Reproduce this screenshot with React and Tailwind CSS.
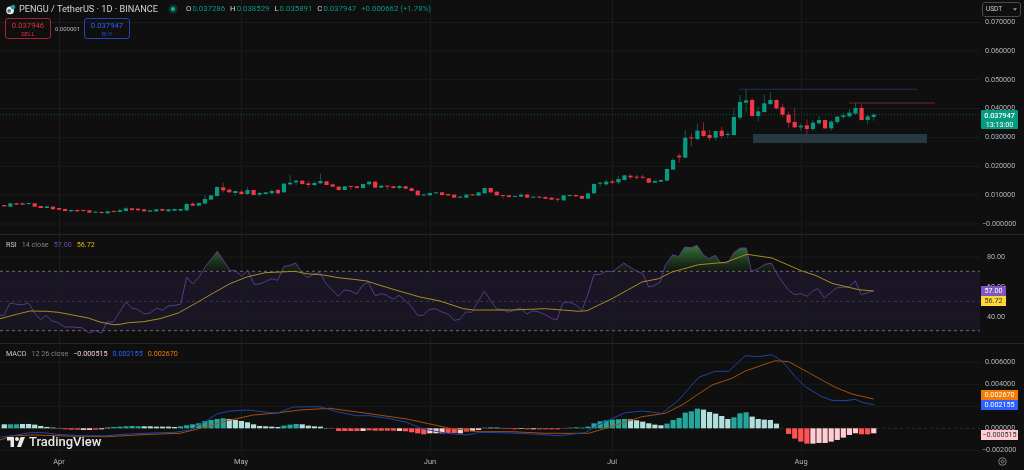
import React from "react";

const GREEN = "#089981";
const RED = "#f23645";
const XK = (k) => 4.3 + 6.08 * k;
const VERT = [59, 241, 430, 612, 801];

// [bodyTop, bodyBottom, wickTop, wickBottom, up] in zoomed crop coordinates
const c3 = [
  [105,109,105,109,0],[100,110,100,110,1],[100,104,98,105,0],[100,104,97,105,0],[99,102,99,104,1],[100,110,99,110,0],[108,114,108,114,0],[109,114,108,115,1],[110,118,110,119,0],[114,119,113,120,0],
  [117,123,116,124,0],[120,124,119,125,1],[120,124,118,125,0],[120,123,119,124,0],[121,128,120,129,0],[125,128,124,129,1],[126,129,124,131,0],[124,130,123,131,1],[123,126,122,127,0],[121,126,116,127,1],
  [115,123,111,124,1],[115,120,114,122,0],[116,121,114,122,0],[118,124,117,125,0],[121,125,120,126,1],[118,124,117,125,1],[117,122,116,124,0],[118,124,117,125,1],[117,122,116,123,1],[117,122,116,123,1],
  [102,121,100,122,1],[101,107,96,108,0],[99,107,97,108,1],[87,101,76,102,1],[76,89,75,90,1],[51,78,50,79,1],[52,61,38,68,0],[59,67,55,68,0],[63,69,62,76,1],[65,72,60,75,0],
  [60,72,52,75,1],[60,75,59,76,0],[69,74,65,78,1],[67,72,66,73,1],[63,70,57,73,1],[60,70,57,73,0],[41,67,40,68,1],[38,43,15,47,1],[32,37,30,45,1],[32,42,31,44,0],
  [40,45,33,53,0],[39,45,34,48,1],[33,40,10,43,1],[34,45,33,46,0],[43,50,41,52,0],[50,60,48,61,0],
];
const c4 = [
  [79,90,78,91,1],[78,81,78,90,0],[79,84,78,85,0],[72,84,71,85,1],[65,73,64,77,1],[65,83,64,84,0],[77,83,76,84,1],[77,80,76,89,0],[79,84,78,86,0],[78,84,76,88,1],
  [79,86,78,87,0],[85,93,82,94,0],[92,106,91,107,0],[103,106,102,109,1],[99,106,98,107,1],[97,100,96,101,1],[97,105,96,106,0],[102,106,101,107,0],[104,113,103,114,0],[110,113,108,114,1],
  [104,113,103,114,1],[103,106,102,107,0],[97,107,96,108,1],[84,100,83,101,1],[84,97,83,98,0],[95,106,94,107,0],[105,107,104,116,0],[106,111,105,112,0],[108,110,107,111,1],[104,110,100,111,1],
  [104,113,102,114,0],[110,113,109,114,1],[110,113,109,114,0],[111,116,109,117,0],[113,119,112,120,0],[116,119,115,126,0],[106,121,105,122,1],[105,108,104,110,1],[105,109,104,110,0],[108,116,107,117,0],
  [100,116,99,117,1],[72,100,70,101,1],[68,71,66,80,1],[65,73,59,77,1],[64,68,58,73,0],[57,67,48,73,1],[46,60,45,61,1],[47,52,43,58,0],[50,53,45,60,0],[50,53,45,57,0],
  [55,68,54,69,0],[63,68,62,69,1],[60,65,59,66,1],[27,62,26,63,1],[0,29,-6,30,1],
];
const c2 = [
  [257,262,250,278,0],[203,263,180,264,1],[202,204,190,228,0],[182,207,160,212,1],[182,198,157,200,0],[195,204,180,212,0],[183,203,182,212,1],[182,198,170,206,0],[192,195,185,203,1],[141,195,115,198,1],
  [96,143,75,150,1],[91,98,58,128,1],[90,138,84,140,0],[124,138,110,155,1],[100,126,73,128,1],[90,102,67,105,1],[90,115,88,118,0],[112,134,102,142,0],[134,158,125,172,0],[156,172,115,175,0],
  [167,172,160,182,1],[166,177,148,192,0],[158,177,150,182,1],[150,160,138,163,1],[150,175,149,177,0],[155,175,150,182,1],[140,156,138,162,1],[136,141,128,148,1],[128,139,118,142,1],[114,131,100,133,1],
  [114,150,103,152,0],[139,150,135,163,1],[134,141,130,152,1],
];
const CANDLES = [
  ...c3.map((c) => [170 + c[0] / 3, 170 + c[1] / 3, 170 + c[2] / 3, 170 + c[3] / 3, c[4]]),
  ...c4.map((c) => [160 + c[0] / 3, 160 + c[1] / 3, 160 + c[2] / 3, 160 + c[3] / 3, c[4]]),
  ...c2.map((c) => [70 + c[0] / 3, 70 + c[1] / 3, 70 + c[2] / 3, 70 + c[3] / 3, c[4]]),
];

const pts = (left, right, leftY, rightY = leftY) => [
  ...left.map(([x, y]) => [x / 3, leftY + y / 3]),
  ...right.map(([x, y]) => [x / 3 + 512, rightY + y / 3]),
];
const toStr = (p) => p.map(([x, y]) => `${x.toFixed(1)},${y.toFixed(1)}`).join(" ");

const RSI = pts(
  [[0,250],[12,250],[30,213],[50,217],[70,218],[85,212],[105,245],[122,263],[138,250],[155,266],[175,272],[195,285],[215,285],[245,287],[268,303],[285,296],[305,303],[320,270],[340,270],[378,210],[395,228],[412,232],[432,246],[450,243],[470,228],[487,235],[505,222],[525,220],[542,217],[560,135],[578,156],[597,135],[615,105],[652,58],[672,88],[690,116],[705,115],[725,133],[743,115],[762,157],[780,156],[815,140],[833,145],[852,103],[870,100],[887,93],[905,122],[923,137],[945,125],[960,122],[978,155],[1015,193],[1032,174],[1050,176],[1070,186],[1088,160],[1105,150],[1125,191],[1145,185],[1160,190],[1180,202],[1197,190],[1215,205],[1235,225],[1253,250],[1270,250],[1288,232],[1307,230],[1325,240],[1345,247],[1362,265],[1380,262],[1397,240],[1415,241],[1453,178],[1490,231],[1510,233],[1525,241]],
  [[0,237],[25,228],[45,246],[62,236],[80,240],[100,248],[120,260],[135,263],[152,213],[170,210],[190,218],[210,235],[225,195],[246,128],[265,127],[282,118],[302,119],[335,93],[358,108],[375,118],[392,125],[410,165],[428,160],[445,150],[460,100],[482,68],[500,74],[518,45],[538,47],[555,40],[575,70],[590,80],[610,70],[625,92],[648,93],[665,62],[685,48],[703,48],[718,118],[735,112],[760,97],[778,93],[800,135],[830,175],[848,188],[868,185],[885,193],[903,176],[918,170],[937,197],[958,180],[975,167],[1010,165],[1030,147],[1048,188],[1085,176]],
  232
);
const RSI_MA = pts(
  [[0,260],[50,247],[90,237],[140,238],[175,241],[265,258],[300,270],[340,278],[360,277],[385,272],[430,269],[480,260],[535,243],[590,212],[640,183],[690,155],[740,135],[795,122],[840,120],[885,118],[920,125],[970,129],[1015,137],[1060,142],[1100,147],[1140,160],[1200,178],[1260,195],[1320,207],[1390,230],[1420,234]],
  [[0,234],[100,230],[200,238],[225,236],[300,200],[390,150],[440,140],[480,120],[560,98],[640,91],[705,67],[780,78],[870,117],[910,130],[960,154],[1040,173],[1085,177]],
  232
);
const MACD = pts(
  [[0,277],[50,270],[90,263],[130,263],[170,268],[240,272],[320,272],[370,268],[430,265],[525,262],[570,255],[610,233],[650,207],[690,198],[740,195],[830,205],[880,186],[960,185],[1010,200],[1070,212],[1110,212],[1170,221],[1220,232],[1270,252],[1340,265],[1400,270],[1440,262]],
  [[0,264],[60,267],[140,272],[220,263],[250,245],[290,225],[340,203],[390,198],[450,205],[500,165],[560,97],[610,79],[650,79],[700,32],[740,35],[780,29],[810,48],[850,95],[880,125],[930,155],[960,166],[1000,167],[1030,163],[1050,172],[1085,179]],
  345
);
const SIGNAL = pts(
  [[0,285],[40,272],[100,270],[200,273],[320,275],[450,268],[540,265],[620,245],[690,225],[760,210],[830,204],[900,195],[990,190],[1100,205],[1220,222],[1350,250],[1440,260]],
  [[0,260],[100,265],[230,265],[290,247],[390,215],[460,205],[510,180],[600,120],[660,100],[700,78],[790,47],[830,50],[890,83],[970,127],[1020,147],[1085,162]],
  345
);

// Histogram: [zoomed height above zero, kind]
const H = [
  [12,"L"],[12,"D"],[12,"D"],[13,"L"],[13,"L"],[11,"L"],[7,"L"],[4,"L"],[2,"L"],[1,"L"],[-3,"R"],[-4,"R"],[-4,"R"],[-5,"P"],[-5,"P"],[-4,"R"],[-3,"P"],
  [2,"L"],[4,"D"],[5,"D"],[6,"D"],[7,"D"],[6,"D"],[6,"L"],[6,"L"],[5,"L"],[5,"L"],[5,"L"],[4,"L"],[6,"D"],[9,"D"],[12,"D"],[15,"D"],[22,"D"],[25,"D"],[28,"D"],[30,"D"],
  [28,"L"],[25,"L"],[22,"L"],[18,"L"],[12,"L"],[7,"L"],[6,"L"],[5,"L"],[4,"L"],[8,"D"],[11,"D"],[13,"D"],[12,"L"],[8,"L"],[6,"L"],[5,"L"],[1,"L"],
  [-1,"R"],[-8,"R"],[-8,"R"],[-8,"R"],[-8,"R"],[-8,"P"],[-6,"R"],[-7,"R"],[-7,"R"],[-7,"R"],[-7,"R"],[-8,"P"],[-9,"R"],[-12,"R"],[-15,"R"],[-18,"R"],[-15,"P"],[-15,"P"],[-15,"P"],[-14,"R"],[-14,"R"],[-15,"P"],[-10,"R"],[-9,"P"],[-5,"P"],
  [2,"D"],[2,"L"],[2,"L"],[1,"L"],[-2,"R"],
  [-3,"R"],[-2,"P"],[-3,"R"],[-3,"P"],[-3,"R"],[-3,"R"],[-3,"R"],[-3,"R"],[-1,"R"],[2,"D"],[3,"D"],[2,"D"],[5,"D"],[15,"D"],[21,"D"],[24,"D"],[26,"D"],[27,"D"],[28,"D"],
  [27,"L"],[24,"L"],[20,"L"],[15,"L"],[11,"L"],[9,"L"],[14,"D"],[25,"D"],[31,"D"],[47,"D"],[51,"D"],[59,"D"],[56,"L"],[49,"L"],[44,"L"],[37,"L"],[28,"L"],[33,"D"],[45,"D"],[48,"D"],
  [35,"L"],[28,"L"],[26,"L"],[25,"L"],[14,"L"],[0,"L"],[-17,"R"],[-31,"R"],[-40,"R"],[-46,"R"],[-46,"P"],[-44,"P"],[-44,"P"],[-40,"P"],[-35,"P"],[-28,"P"],[-20,"P"],[-15,"P"],[-18,"R"],[-18,"R"],[-15,"P"],
];
const HCOL = { L: "#b2dfdb", D: "#26a69a", R: "#ff5252", P: "#ffcdd2" };

function VGrid({ h }) {
  return VERT.map((x) => <line key={x} x1={x + 0.5} x2={x + 0.5} y1={0} y2={h} stroke="#1b1b1b" />);
}
function HGrid({ ys }) {
  return ys.map((y) => <line key={y} x1={0} x2={980} y1={y} y2={y} stroke="#1b1b1b" />);
}

function PriceChart() {
  return (
    <svg viewBox="0 0 980 234" className="block h-[234px] w-[980px]">
      <VGrid h={234} />
      <HGrid ys={[22.5, 51, 79.7, 108.5, 137.7, 166.3, 195, 224]} />
      <line x1={0} x2={980} y1={114.7} y2={114.7} stroke="#0e5a4c" strokeDasharray="1 2" />
      <rect x={753} y={134} width={174} height={9} fill="#27393e" />
      <line x1={739} x2={917} y1={89.3} y2={89.3} stroke="#1d2d66" />
      <line x1={849} x2={935} y1={103} y2={103} stroke="#7a222a" />
      {CANDLES.map((c, k) => {
        const x = XK(k);
        const col = c[4] ? GREEN : RED;
        return (
          <g key={k}>
            <line x1={x} x2={x} y1={c[2]} y2={c[3]} stroke={col} strokeOpacity={0.7} strokeWidth={0.8} />
            <rect x={x - 2.1} y={c[0]} width={4.2} height={Math.max(c[1] - c[0], 1)} fill={col} />
          </g>
        );
      })}
    </svg>
  );
}

function RsiChart() {
  const fill = toStr([[0, 300], ...RSI, [RSI[RSI.length - 1][0], 300]]);
  return (
    <svg viewBox="0 235 980 108" className="block h-[108px] w-[980px]">
      <defs>
        <linearGradient id="ob" x1="0" y1="245" x2="0" y2="271.3" gradientUnits="userSpaceOnUse">
          <stop offset="0" stopColor="#3a7f3c" stopOpacity="0.95" />
          <stop offset="1" stopColor="#2a5a2c" stopOpacity="0.1" />
        </linearGradient>
        <clipPath id="obc">
          <rect x="0" y="235" width="980" height="36.3" />
        </clipPath>
      </defs>
      <rect x={0} y={271.3} width={980} height={59.4} fill="#1a1525" />
      <g transform="translate(0 235)"><VGrid h={108} /></g>
      <HGrid ys={[257, 286.5, 316]} />
      <line x1={0} x2={980} y1={271.3} y2={271.3} stroke="#6b6b72" strokeDasharray="3 3" />
      <line x1={0} x2={980} y1={301.3} y2={301.3} stroke="#3b3b42" strokeDasharray="3 3" />
      <line x1={0} x2={980} y1={330.7} y2={330.7} stroke="#6b6b72" strokeDasharray="3 3" />
      <polygon points={fill} fill="url(#ob)" clipPath="url(#obc)" />
      <polyline points={toStr(RSI)} fill="none" stroke="#5b3f94" strokeWidth={0.9} />
      <polyline points={toStr(RSI_MA)} fill="none" stroke="#a98b1f" strokeWidth={1} />
    </svg>
  );
}

function MacdChart() {
  const base = 428.3;
  return (
    <svg viewBox="0 344 980 109" className="block h-[109px] w-[980px]">
      <g transform="translate(0 344)"><VGrid h={109} /></g>
      <HGrid ys={[362.3, 384.3, 406.3, 450.3]} />
      <line x1={0} x2={980} y1={428.3} y2={428.3} stroke="#2c2c2c" strokeDasharray="3 3" />
      {H.map(([v, kind], k) => {
        const h = Math.abs(v) / 3;
        const x = XK(k);
        return <rect key={k} x={x - 2.6} width={5.2} y={v > 0 ? base - h : base} height={h} fill={HCOL[kind]} />;
      })}
      <polyline points={toStr(SIGNAL)} fill="none" stroke="#a24f0a" strokeWidth={1} />
      <polyline points={toStr(MACD)} fill="none" stroke="#1e44a8" strokeWidth={1} />
    </svg>
  );
}

function Tick({ h, children }) {
  return <div className={`flex items-center justify-start pl-[5px] ${h}`}>{children}</div>;
}

function Legend() {
  return (
    <div className="absolute left-[5px] top-[3px] flex flex-col gap-[3px]">
      <div className="flex h-[12px] items-center text-[9.2px] text-[#d1d4dc]">
        <svg viewBox="0 0 12 12" className="mr-[2px] h-[11px] w-[12px]">
          <circle cx="5" cy="7" r="4.2" fill="#e8edf5" />
          <circle cx="8.2" cy="3.4" r="2.6" fill="#10a08c" />
          <circle cx="4" cy="7.5" r="2" fill="#5c6b82" />
        </svg>
        <span className="w-[152px] whitespace-nowrap">PENGU / TetherUS · 1D · BINANCE</span>
        <span className="relative mr-[10px] h-[4px] w-[4px] rounded-full bg-[#11b795] shadow-[0_0_0_2.5px_rgba(8,153,129,0.3)]" />
        <div className="ml-[1px] flex gap-[5px] whitespace-nowrap text-[7.8px] text-[#089981]">
          <span><b className="mr-[1px] font-normal text-[#d1d4dc]">O</b>0.037286</span>
          <span><b className="mr-[1px] font-normal text-[#d1d4dc]">H</b>0.038529</span>
          <span><b className="mr-[1px] font-normal text-[#d1d4dc]">L</b>0.035891</span>
          <span><b className="mr-[1px] font-normal text-[#d1d4dc]">C</b>0.037947</span>
          <span>+0.000662 (+1.78%)</span>
        </div>
      </div>
      <div className="flex items-center">
        <div className="flex h-[21px] w-[46px] flex-col items-center justify-center rounded-[3px] border border-[#a8232e] text-[#e0303e]">
          <span className="text-[7.7px] leading-[9px]">0.037946</span>
          <span className="text-[6px] leading-[7px]">SELL</span>
        </div>
        <span className="w-[33px] text-center text-[6px] text-[#b2b5be]">0.000001</span>
        <div className="flex h-[21px] w-[46px] flex-col items-center justify-center rounded-[3px] border border-[#1f47b5] text-[#2962ff]">
          <span className="text-[7.7px] leading-[9px]">0.037947</span>
          <span className="text-[6px] leading-[7px] text-[#1f47b5]">BUY</span>
        </div>
      </div>
    </div>
  );
}

function PaneLegend({ top, children }) {
  return <div className={`absolute left-[6px] flex items-center gap-[5px] whitespace-nowrap text-[7.2px] text-[#808080] ${top}`}>{children}</div>;
}

export default function App() {
  return (
    <div className="flex h-[470px] w-[1024px] flex-col overflow-hidden bg-[#0f0f0f] font-['Roboto',sans-serif] text-[7.2px] text-[#b2b5be] blur-[0.35px]">
      {/* Price pane */}
      <div className="flex h-[235px] border-b border-[#262626]">
        <div className="relative w-[980px]">
          <PriceChart />
          <Legend />
        </div>
        <div className="relative w-[44px] pt-[8px]">
          <div className="absolute left-[2px] top-[2px] flex h-[15px] w-[39px] items-center justify-between rounded-[3px] border border-[#4a4a4a] pl-[3px] pr-[3px] text-[6.5px] text-[#d1d4dc]">
            <span>USDT</span>
            <svg viewBox="0 0 6 4" className="h-[3px] w-[4px]" fill="#9a9a9a"><path d="M0 0h6L3 4z" /></svg>
          </div>
          <Tick h="h-[28.8px]">0.070000</Tick>
          <Tick h="h-[28.8px]">0.060000</Tick>
          <Tick h="h-[28.8px]">0.050000</Tick>
          <Tick h="h-[28.8px]">0.040000</Tick>
          <Tick h="h-[28.8px]">0.030000</Tick>
          <Tick h="h-[28.8px]">0.020000</Tick>
          <Tick h="h-[28.8px]">0.010000</Tick>
          <Tick h="h-[28.8px]"><span className="-ml-[3px]">−0.000000</span></Tick>
          <div className="absolute left-[1px] top-[110px] flex h-[19px] w-[37px] flex-col items-center justify-center rounded-[1px] bg-[#089981] text-white">
            <span className="text-[7.2px] font-medium leading-[9px]">0.037947</span>
            <span className="text-[7.2px] leading-[9px]">13:13:00</span>
          </div>
        </div>
      </div>

      {/* RSI pane */}
      <div className="flex h-[109px] border-b border-[#262626]">
        <div className="relative w-[980px]">
          <RsiChart />
          <PaneLegend top="top-[5px]">
            <span className="text-[#c8c8c8]">RSI</span>
            <span>14 close</span>
            <span className="text-[#6a4cb0]">57.00</span>
            <span className="text-[#e6b800]">56.72</span>
          </PaneLegend>
        </div>
        <div className="relative w-[44px] pt-[7px]">
          <Tick h="h-[30px]"><span className="pl-[2px]">80.00</span></Tick>
          <Tick h="h-[30px]"><span className="pl-[2px]">60.00</span></Tick>
          <Tick h="h-[30px]"><span className="pl-[2px]">40.00</span></Tick>
          <div className="absolute left-[1px] top-[51px] flex h-[10px] w-[25px] items-center justify-center bg-[#7e57c2] text-white">57.00</div>
          <div className="absolute left-[1px] top-[61px] flex h-[10px] w-[25px] items-center justify-center bg-[#fdd835] text-[#333]">56.72</div>
        </div>
      </div>

      {/* MACD pane */}
      <div className="flex h-[109px]">
        <div className="relative w-[980px]">
          <MacdChart />
          <PaneLegend top="top-[5px]">
            <span className="text-[#c8c8c8]">MACD</span>
            <span>12 26 close</span>
            <span className="text-[#ffcdd2]">−0.000515</span>
            <span className="text-[#2962ff]">0.002155</span>
            <span className="text-[#f57c00]">0.002670</span>
          </PaneLegend>
          <div className="absolute left-[7px] top-[90px] flex items-center gap-[4px] text-[13px] font-medium leading-[15px] text-[#e8e8e8]">
            <svg viewBox="0 0 36 20" className="h-[10px] w-[18px]" fill="currentColor">
              <path d="M14 20H7V7H0V0h14v20zM28 20h-8L27 0h9l-8 20z" />
              <circle cx="20" cy="4" r="4" />
            </svg>
            <span>TradingView</span>
          </div>
        </div>
        <div className="relative w-[44px] pt-[7px]">
          <Tick h="h-[22px]">0.006000</Tick>
          <Tick h="h-[22px]">0.004000</Tick>
          <Tick h="h-[22px]">0.002000</Tick>
          <Tick h="h-[22px]">0.000000</Tick>
          <Tick h="h-[22px]"><span className="-ml-[3px]">−0.002000</span></Tick>
          <div className="absolute left-[1px] top-[46px] flex h-[10px] w-[37px] items-center justify-center bg-[#f57c00] text-white">0.002670</div>
          <div className="absolute left-[1px] top-[56px] flex h-[10px] w-[37px] items-center justify-center bg-[#2962ff] text-white">0.002155</div>
          <div className="absolute left-[1px] top-[86px] flex h-[10px] w-[37px] items-center justify-center bg-[#ffcdd2] text-[#333]">−0.000515</div>
        </div>
      </div>

      {/* Time axis */}
      <div className="flex h-[17px] items-center">
        <div className="flex w-[980px] text-[7.5px]">
          <span className="ml-[39px] w-[40px] text-center">Apr</span>
          <span className="ml-[142px] w-[40px] text-center">May</span>
          <span className="ml-[149px] w-[40px] text-center">Jun</span>
          <span className="ml-[142px] w-[40px] text-center">Jul</span>
          <span className="ml-[149px] w-[40px] text-center">Aug</span>
        </div>
        <div className="flex w-[44px] justify-center">
          <svg viewBox="0 0 10 10" className="h-[9px] w-[9px]" fill="none" stroke="#9a9a9a" strokeWidth="0.9">
            <circle cx="5" cy="5" r="4.2" />
            <circle cx="5" cy="5" r="1.6" />
          </svg>
        </div>
      </div>
    </div>
  );
}
